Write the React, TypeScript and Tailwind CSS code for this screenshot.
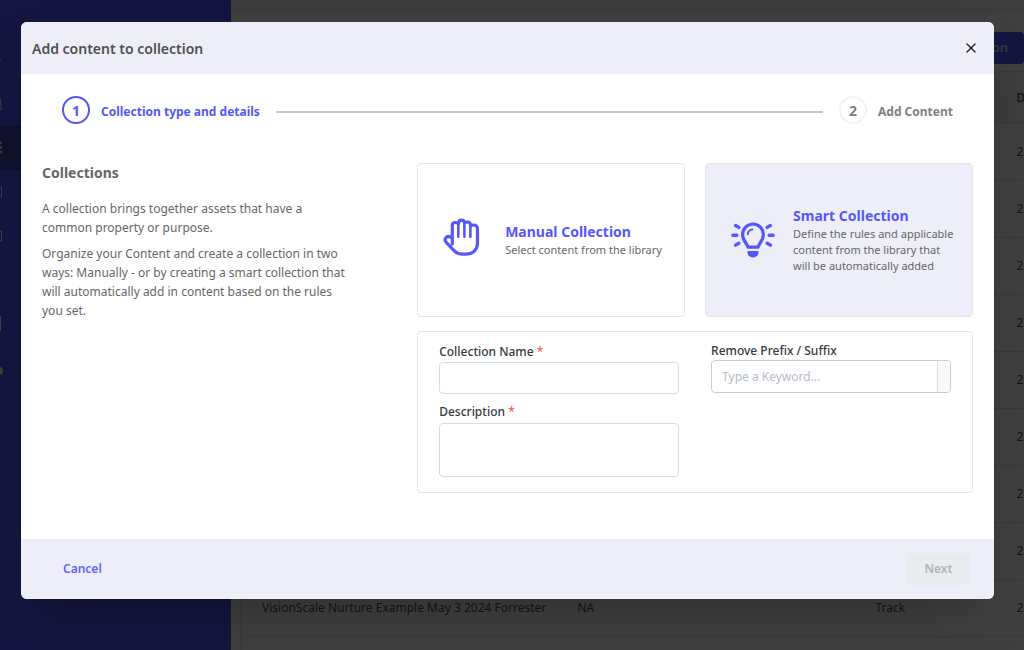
import { useState } from 'react'
import { X } from 'lucide-react'

interface Row {
  id: number
  name: string
  product: string
  type: string
  date: string
}

const ROWS: Row[] = [
  ...Array.from({ length: 8 }, (_, i) => ({ id: i, name: '', product: '', type: '', date: '2' })),
  { id: 8, name: 'VisionScale Nurture Example May 3 2024 Forrester', product: 'NA', type: 'Track', date: '2' },
  { id: 9, name: '', product: '', type: '', date: '' },
]

function HandIcon() {
  return (
    <svg viewBox="0 0 37 38" className="w-[37px] h-[38px] mb-1.5 shrink-0" fill="none" stroke="currentColor" strokeLinecap="round" strokeLinejoin="round" aria-hidden="true">
      <path strokeWidth="3.2" d="M9.300 26V7.300C9.300 5.200 11 4.500 12.300 4.500c1.200 0 2.200.300 3 1.300.300-2.500 1.500-3.700 3.200-3.700s2.900 1.200 3 2.900c.800-.700 1.800-1 2.900-1 2 0 3.200 1.400 3.200 3.700.800-.500 1.700-.700 2.700-.700 2.500 0 4.200 1.500 4.200 4V25c0 6.500-4.600 11.200-11.500 11.200h-3.500c-3.500 0-6-1-8.200-3.300l-8-8.500c-3-3.300.400-7.400 4.300-5.200l1.700 1.300" />
      <path strokeWidth="2.600" d="M15.300 5.800v13M21.400 5.400v13.400M27.400 7.600v11.200" />
    </svg>
  )
}

function BulbIcon() {
  return (
    <svg viewBox="0 0 44 36" className="w-11 h-9 shrink-0" fill="none" stroke="currentColor" strokeLinecap="round" strokeLinejoin="round" aria-hidden="true">
      <path strokeWidth="3.200" d="M17 25.200c-.6-3.400-5.400-6.400-5.400-12.800a10.400 10.400 0 0 1 20.800 0c0 6.400-4.800 9.400-5.400 12.800z" />
      <path strokeWidth="2" d="M16.800 12.200a5 5 0 0 1 4.600-4.800" />
      <path strokeWidth="3.400" d="M1.900 13.300h4M38.100 13.300h4M4.600 3.500l3.200 1.900M39.400 3.500l-3.200 1.900M4.600 23.100L7.800 21.200M39.400 23.100L36.200 21.200" />
      <path fill="currentColor" stroke="none" d="M16.500 29h11v1.500a5 5 0 0 1-5 5h-1a5 5 0 0 1-5-5z" />
    </svg>
  )
}

function Sidebar() {
  return (
    <aside className="w-[231px] shrink-0 bg-[#5058fa] pt-[38px] text-white">
      <nav>
        <ul>
          <li className="h-11 flex items-center">
            <svg className="w-2 h-5" viewBox="0 0 8 20" fill="none" stroke="currentColor"><path d="M0 10h1" /></svg>
          </li>
          <li className="h-11 flex items-center">
            <svg className="w-2 h-5" viewBox="0 0 8 20" fill="none" stroke="currentColor"><path d="M0 4l1.500 11.500H0" /></svg>
          </li>
          <li className="h-11 flex items-center bg-[#4044b4]">
            <svg className="w-2 h-5" viewBox="0 0 8 20" fill="none" stroke="currentColor" strokeWidth="2.500"><path d="M0 5h1.800M0 9.500h1.800M0 14h1.800" /></svg>
          </li>
          <li className="h-11 flex items-center">
            <svg className="w-2 h-5" viewBox="0 0 8 20" fill="none" stroke="currentColor"><path d="M0 5h1.500v10H0" /></svg>
          </li>
          <li className="h-11 flex items-center">
            <svg className="w-2 h-5" viewBox="0 0 8 20" fill="none" stroke="currentColor"><path d="M0 5h1.500v10H0" /></svg>
          </li>
          <li className="h-11" />
          <li className="h-11 flex items-center">
            <svg className="w-2 h-5" viewBox="0 0 8 20" fill="none" stroke="currentColor"><path d="M.500 2v15" /></svg>
          </li>
          <li className="h-12 flex items-center">
            <svg className="w-2 h-5" viewBox="0 0 8 20" fill="currentColor"><circle cx="-1" cy="11" r="4" /></svg>
          </li>
        </ul>
      </nav>
    </aside>
  )
}

function CollectionsPage() {
  return (
    <div className="flex h-screen overflow-hidden" aria-hidden="true">
      <Sidebar />
      <div className="flex-1 min-w-0 overflow-hidden bg-white">
        <div className="h-3 bg-[#eeeef7]" />
        <div className="h-[59px] pt-5 flex items-start justify-end">
          <button type="button" className="h-8 w-36 rounded bg-[#5058fa] pr-4 text-right text-[13px] font-semibold text-white/80">
            Collection
          </button>
        </div>
        <table className="ml-[9px] w-[900px] table-fixed border border-[#e6e6ec] text-left text-[12px] text-[#505058]">
          <thead>
            <tr className="h-[52px] bg-[#f3f3f6]">
              <th className="w-[316px] pl-[21px]" />
              <th className="w-[298px] pl-[21px]" />
              <th className="w-[140px] pl-[21px]" />
              <th className="pl-[22px] font-medium">D</th>
            </tr>
          </thead>
          <tbody>
            {ROWS.map(row => (
              <tr key={row.id} className="h-[57px] border-t border-[#e2e2e6]">
                <td className="pl-[21px] whitespace-nowrap">{row.name}</td>
                <td className="pl-[21px]">{row.product}</td>
                <td className="pl-[21px]">{row.type}</td>
                <td className="pl-[22px]">{row.date}</td>
              </tr>
            ))}
          </tbody>
        </table>
      </div>
    </div>
  )
}

function TypeCard({ title, text, selected, onClick, children }: {
  title: string; text: string; selected: boolean; onClick: () => void; children: React.ReactNode
}) {
  return (
    <button
      type="button"
      aria-pressed={selected}
      onClick={onClick}
      className={`h-[154px] flex items-center rounded border border-[#e4e5ea] pl-[25px] pr-[15px] text-left ${selected ? 'bg-[#eeeef8]' : 'bg-white'}`}
    >
      <span className="w-[62px] flex shrink-0 text-[#5458fa]">{children}</span>
      <span className="block">
        <span className="block text-[14px] leading-5 font-bold text-[#5458fa]">{title}</span>
        <span className="block text-[11px] leading-4 text-[#666]">{text}</span>
      </span>
    </button>
  )
}

export default function App() {
  const [type, setType] = useState<'manual' | 'smart'>('smart')

  return (
    <div className="relative font-['Noto_Sans','Open_Sans',sans-serif]">
      <CollectionsPage />

      <div className="absolute inset-0 bg-black/75 pt-[22px] pl-[21px] pr-[30px]">
        <div role="dialog" aria-labelledby="dialog-title" className="rounded-md overflow-hidden bg-white shadow-2xl">

          {/* Header */}
          <div className="h-[52px] flex items-center justify-between bg-[#eeeef8] pl-[11px] pr-[15px]">
            <h1 id="dialog-title" className="text-[14px] font-semibold text-[#505050]">Add content to collection</h1>
            <button type="button" aria-label="Close" className="text-[#222]">
              <X className="w-4 h-4" strokeWidth={2} />
            </button>
          </div>

          <div className="px-[21px] pt-[22px] pb-[46px]">
            {/* Steps */}
            <ol className="flex items-center px-5 text-[12px] font-bold text-[#808080]">
              <li className="flex items-center gap-[11px] text-[#5458fa]">
                <span className="w-7 h-7 rounded-full border-2 border-[#5458fa] flex items-center justify-center text-[14px]">1</span>
                <span className="pt-[3px]">Collection type and details</span>
              </li>
              <li aria-hidden="true" className="flex-1 mx-4 mt-[3px] h-[2px] bg-[#c8c8c8]" />
              <li className="flex items-center gap-[11px]">
                <span className="w-7 h-7 rounded-full border-2 border-[#f1f4f5] flex items-center justify-center text-[14px]">2</span>
                <span className="pt-[3px]">Add Content</span>
              </li>
            </ol>

            <div className="mt-[39px] grid grid-cols-[27fr_40fr]">
              <div className="pr-16 text-[12px] leading-[19px] text-[#666]">
                <h2 className="text-[14px] leading-5 font-bold">Collections</h2>
                <p className="mt-4">A collection brings together assets that have a common property or purpose.</p>
                <p className="mt-[7px]">
                  Organize your Content and create a collection in two ways: Manually - or by creating a smart
                  collection that will automatically add in content based on the rules you set.
                </p>
              </div>

              <div>
                <div className="grid grid-cols-2 gap-5">
                  <TypeCard
                    title="Manual Collection"
                    text="Select content from the library"
                    selected={type === 'manual'}
                    onClick={() => setType('manual')}
                  >
                    <HandIcon />
                  </TypeCard>
                  <TypeCard
                    title="Smart Collection"
                    text="Define the rules and applicable content from the library that will be automatically added"
                    selected={type === 'smart'}
                    onClick={() => setType('smart')}
                  >
                    <BulbIcon />
                  </TypeCard>
                </div>

                <form className="mt-[14px] grid grid-cols-2 gap-8 rounded border border-[#e4e5ea] px-[21px] pt-[10px] pb-[15px] text-[12px] font-medium text-[#333a40]">
                  <div>
                    <label htmlFor="name" className="block leading-5">
                      Collection Name <span className="text-[#f55]">*</span>
                    </label>
                    <input id="name" type="text" className="block w-full h-8 rounded border border-[#d8dce3] px-2" />
                    <label htmlFor="description" className="block mt-2 leading-5">
                      Description <span className="text-[#f55]">*</span>
                    </label>
                    <textarea id="description" className="block w-full h-[54px] mt-px resize-none rounded border border-[#d8dce3] px-2" />
                  </div>
                  <div>
                    <label htmlFor="keyword" className="block leading-[18px]">Remove Prefix / Suffix</label>
                    <div className="flex h-[33px] rounded border border-[#ccc] overflow-hidden">
                      <input
                        id="keyword"
                        type="text"
                        placeholder="Type a Keyword..."
                        className="flex-1 min-w-0 px-[10px] font-normal placeholder:text-[#b4bcc8]"
                      />
                      <span className="w-[13px] border-l border-[#ddd] bg-[#fafafa]" />
                    </div>
                  </div>
                </form>
              </div>
            </div>
          </div>

          {/* Footer */}
          <div className="h-[60px] flex items-center justify-between bg-[#eeeef8] pl-[42px] pr-6 text-[12px] font-semibold">
            <button type="button" className="text-[#6262fb]">Cancel</button>
            <button type="button" disabled className="h-8 w-[63px] rounded-sm bg-[#e9ecef] text-[#adb5bd]">Next</button>
          </div>
        </div>
      </div>
    </div>
  )
}
